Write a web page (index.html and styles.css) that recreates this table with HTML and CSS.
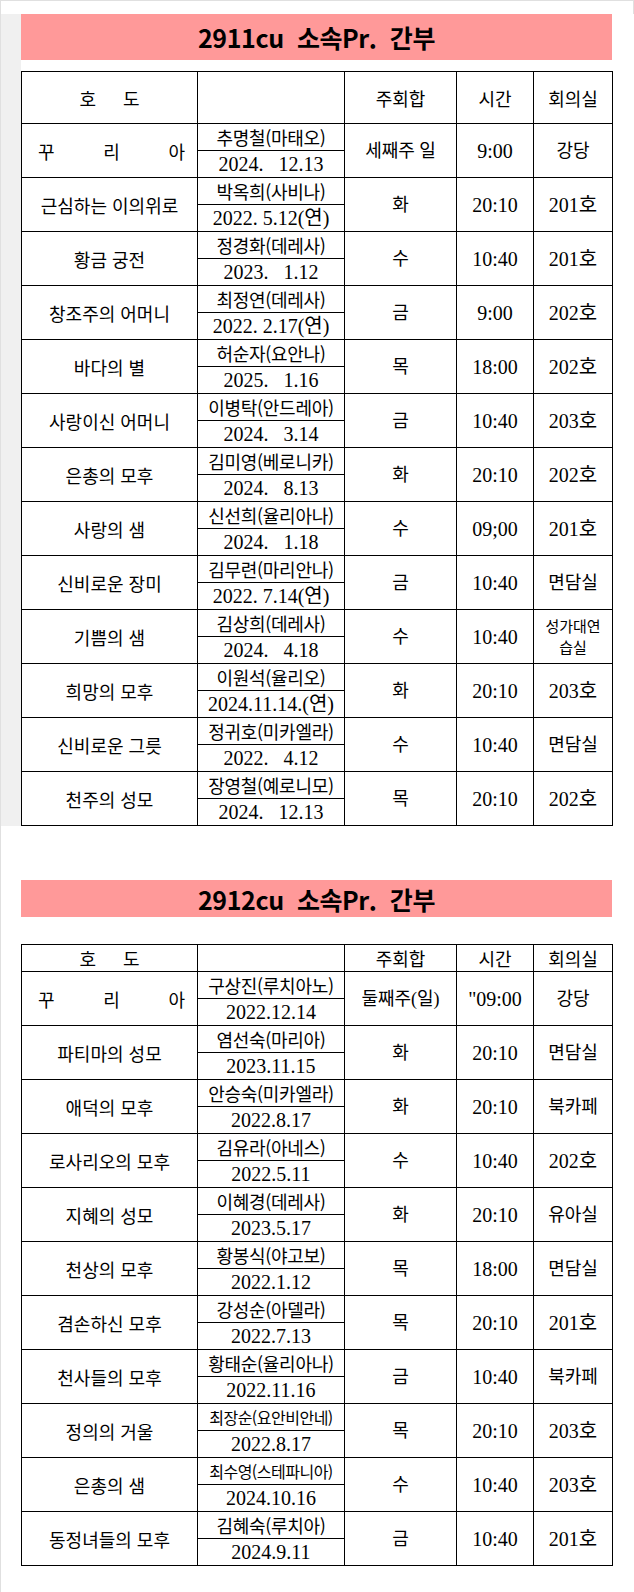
FILE: index.html
```html
<!DOCTYPE html>
<html lang="ko">
<head>
<meta charset="utf-8">
<title>소속Pr. 간부</title>
<link rel="stylesheet" href="styles.css">
</head>
<body>
<div class="page">
  <div class="topbar"></div>
  <section class="sheet sheet--first">
    <h2 class="banner banner--tall">2911cu&nbsp; 소속Pr.&nbsp; 간부</h2>
    <table class="roster roster--tallhead">
      <colgroup><col class="c1"><col class="c2"><col class="c3"><col class="c4"><col class="c5"></colgroup>
      <thead>
        <tr><th class="hodo">호<span class="gap"></span>도</th><th></th><th>주회합</th><th>시간</th><th>회의실</th></tr>
      </thead>
      <tbody>
        <tr><td rowspan="2" class="name"><div class="spread"><span>꾸</span><span>리</span><span>아</span></div></td><td class="who">추명철(마태오)</td><td rowspan="2">세째주 일</td><td rowspan="2" class="num">9:00</td><td rowspan="2">강당</td></tr>
        <tr><td class="date">2024.&nbsp;&nbsp; 12.13</td></tr>
        <tr><td rowspan="2" class="name">근심하는 이의위로</td><td class="who">박옥희(사비나)</td><td rowspan="2">화</td><td rowspan="2" class="num">20:10</td><td rowspan="2" class="num">201호</td></tr>
        <tr><td class="date">2022. 5.12(연)</td></tr>
        <tr><td rowspan="2" class="name">황금 궁전</td><td class="who">정경화(데레사)</td><td rowspan="2">수</td><td rowspan="2" class="num">10:40</td><td rowspan="2" class="num">201호</td></tr>
        <tr><td class="date">2023.&nbsp;&nbsp; 1.12</td></tr>
        <tr><td rowspan="2" class="name">창조주의 어머니</td><td class="who">최정연(데레사)</td><td rowspan="2">금</td><td rowspan="2" class="num">9:00</td><td rowspan="2" class="num">202호</td></tr>
        <tr><td class="date">2022. 2.17(연)</td></tr>
        <tr><td rowspan="2" class="name">바다의 별</td><td class="who">허순자(요안나)</td><td rowspan="2">목</td><td rowspan="2" class="num">18:00</td><td rowspan="2" class="num">202호</td></tr>
        <tr><td class="date">2025.&nbsp;&nbsp; 1.16</td></tr>
        <tr><td rowspan="2" class="name">사랑이신 어머니</td><td class="who">이병탁(안드레아)</td><td rowspan="2">금</td><td rowspan="2" class="num">10:40</td><td rowspan="2" class="num">203호</td></tr>
        <tr><td class="date">2024.&nbsp;&nbsp; 3.14</td></tr>
        <tr><td rowspan="2" class="name">은총의 모후</td><td class="who">김미영(베로니카)</td><td rowspan="2">화</td><td rowspan="2" class="num">20:10</td><td rowspan="2" class="num">202호</td></tr>
        <tr><td class="date">2024.&nbsp;&nbsp; 8.13</td></tr>
        <tr><td rowspan="2" class="name">사랑의 샘</td><td class="who">신선희(율리아나)</td><td rowspan="2">수</td><td rowspan="2" class="num">09;00</td><td rowspan="2" class="num">201호</td></tr>
        <tr><td class="date">2024.&nbsp;&nbsp; 1.18</td></tr>
        <tr><td rowspan="2" class="name">신비로운 장미</td><td class="who">김무련(마리안나)</td><td rowspan="2">금</td><td rowspan="2" class="num">10:40</td><td rowspan="2">면담실</td></tr>
        <tr><td class="date">2022. 7.14(연)</td></tr>
        <tr><td rowspan="2" class="name">기쁨의 샘</td><td class="who">김상희(데레사)</td><td rowspan="2">수</td><td rowspan="2" class="num">10:40</td><td rowspan="2" class="small">성가대연<br>습실</td></tr>
        <tr><td class="date">2024.&nbsp;&nbsp; 4.18</td></tr>
        <tr><td rowspan="2" class="name">희망의 모후</td><td class="who">이원석(율리오)</td><td rowspan="2">화</td><td rowspan="2" class="num">20:10</td><td rowspan="2" class="num">203호</td></tr>
        <tr><td class="date">2024.11.14.(연)</td></tr>
        <tr><td rowspan="2" class="name">신비로운 그릇</td><td class="who">정귀호(미카엘라)</td><td rowspan="2">수</td><td rowspan="2" class="num">10:40</td><td rowspan="2">면담실</td></tr>
        <tr><td class="date">2022.&nbsp;&nbsp; 4.12</td></tr>
        <tr><td rowspan="2" class="name">천주의 성모</td><td class="who">장영철(예로니모)</td><td rowspan="2">목</td><td rowspan="2" class="num">20:10</td><td rowspan="2" class="num">202호</td></tr>
        <tr><td class="date">2024.&nbsp;&nbsp; 12.13</td></tr>
      </tbody>
    </table>
  </section>

  <section class="sheet sheet--second">
    <h2 class="banner banner--short">2912cu&nbsp; 소속Pr.&nbsp; 간부</h2>
    <table class="roster">
      <colgroup><col class="c1"><col class="c2"><col class="c3"><col class="c4"><col class="c5"></colgroup>
      <thead>
        <tr><th class="hodo">호<span class="gap"></span>도</th><th></th><th>주회합</th><th>시간</th><th>회의실</th></tr>
      </thead>
      <tbody>
        <tr><td rowspan="2" class="name"><div class="spread"><span>꾸</span><span>리</span><span>아</span></div></td><td class="who">구상진(루치아노)</td><td rowspan="2">둘째주(일)</td><td rowspan="2" class="num">"09:00</td><td rowspan="2">강당</td></tr>
        <tr><td class="date">2022.12.14</td></tr>
        <tr><td rowspan="2" class="name">파티마의 성모</td><td class="who">염선숙(마리아)</td><td rowspan="2">화</td><td rowspan="2" class="num">20:10</td><td rowspan="2">면담실</td></tr>
        <tr><td class="date">2023.11.15</td></tr>
        <tr><td rowspan="2" class="name">애덕의 모후</td><td class="who">안승숙(미카엘라)</td><td rowspan="2">화</td><td rowspan="2" class="num">20:10</td><td rowspan="2">북카페</td></tr>
        <tr><td class="date">2022.8.17</td></tr>
        <tr><td rowspan="2" class="name">로사리오의 모후</td><td class="who">김유라(아네스)</td><td rowspan="2">수</td><td rowspan="2" class="num">10:40</td><td rowspan="2" class="num">202호</td></tr>
        <tr><td class="date">2022.5.11</td></tr>
        <tr><td rowspan="2" class="name">지혜의 성모</td><td class="who">이혜경(데레사)</td><td rowspan="2">화</td><td rowspan="2" class="num">20:10</td><td rowspan="2">유아실</td></tr>
        <tr><td class="date">2023.5.17</td></tr>
        <tr><td rowspan="2" class="name">천상의 모후</td><td class="who">황봉식(야고보)</td><td rowspan="2">목</td><td rowspan="2" class="num">18:00</td><td rowspan="2">면담실</td></tr>
        <tr><td class="date">2022.1.12</td></tr>
        <tr><td rowspan="2" class="name">겸손하신 모후</td><td class="who">강성순(아델라)</td><td rowspan="2">목</td><td rowspan="2" class="num">20:10</td><td rowspan="2" class="num">201호</td></tr>
        <tr><td class="date">2022.7.13</td></tr>
        <tr><td rowspan="2" class="name">천사들의 모후</td><td class="who">황태순(율리아나)</td><td rowspan="2">금</td><td rowspan="2" class="num">10:40</td><td rowspan="2">북카페</td></tr>
        <tr><td class="date">2022.11.16</td></tr>
        <tr><td rowspan="2" class="name">정의의 거울</td><td class="who who--small">최장순(요안비안네)</td><td rowspan="2">목</td><td rowspan="2" class="num">20:10</td><td rowspan="2" class="num">203호</td></tr>
        <tr><td class="date">2022.8.17</td></tr>
        <tr><td rowspan="2" class="name">은총의 샘</td><td class="who who--small">최수영(스테파니아)</td><td rowspan="2">수</td><td rowspan="2" class="num">10:40</td><td rowspan="2" class="num">203호</td></tr>
        <tr><td class="date">2024.10.16</td></tr>
        <tr><td rowspan="2" class="name">동정녀들의 모후</td><td class="who">김혜숙(루치아)</td><td rowspan="2">금</td><td rowspan="2" class="num">10:40</td><td rowspan="2" class="num">201호</td></tr>
        <tr><td class="date">2024.9.11</td></tr>
      </tbody>
    </table>
  </section>
</div>
</body>
</html>
```

FILE: styles.css
```css
* { box-sizing: border-box; }

html, body {
  margin: 0;
  padding: 0;
  background: #ffffff;
}

body {
  font-family: "Liberation Serif", "Noto Sans CJK KR", serif;
  color: #000;
}

.page {
  width: 634px;
  min-height: 1592px;
  border-top: 1px solid #e0e0e0;
  border-left: 1px solid #e0e0e0;
}

.topbar {
  height: 13px;
  border-right: 1px solid #e0e0e0;
}

.sheet {
  width: 611px;
}

.sheet--first {
  border-left: 20px solid #f0f0f0;
}

.sheet--second {
  margin-top: 54px;
  padding-left: 20px;
}

.banner {
  margin: 0;
  background: #ff9999;
  font-family: "Noto Sans CJK KR", sans-serif;
  font-weight: 700;
  font-size: 25px;
  text-align: center;
  letter-spacing: -0.4px;
  display: flex;
  align-items: center;
  justify-content: center;
}

.banner--tall {
  height: 46px;
  margin-bottom: 11px;
}

.banner--short {
  height: 37px;
  margin-bottom: 27px;
}

.roster {
  width: 591px;
  border-collapse: collapse;
  table-layout: fixed;
}

.c1 { width: 176px; }
.c2 { width: 147px; }
.c3 { width: 112px; }
.c4 { width: 77px; }
.c5 { width: 79px; }

.roster th,
.roster td {
  border: 1px solid #000;
  padding: 0;
  text-align: center;
  vertical-align: middle;
  white-space: nowrap;
  font-weight: 400;
  font-size: 18px;
  line-height: 1;
}

.roster th {
  font-family: "Noto Sans CJK KR", sans-serif;
  height: 27px;
}

.roster--tallhead th {
  height: 52px;
}

.roster td {
  height: 27px;
}

.hodo .gap {
  display: inline-block;
  width: 27px;
}

.name {
  font-family: "Noto Sans CJK KR", sans-serif;
}

.spread {
  display: flex;
  justify-content: space-between;
  padding: 0 12px 0 16px;
}

.who {
  font-family: "Noto Sans CJK KR", sans-serif;
  letter-spacing: -0.3px;
}

.who--small {
  font-size: 16px !important;
  letter-spacing: -0.5px;
}

.date {
  font-size: 20px !important;
}

.num {
  font-size: 20px !important;
}

.small {
  font-family: "Noto Sans CJK KR", sans-serif;
  font-size: 15px !important;
  line-height: 1.35 !important;
}
```
